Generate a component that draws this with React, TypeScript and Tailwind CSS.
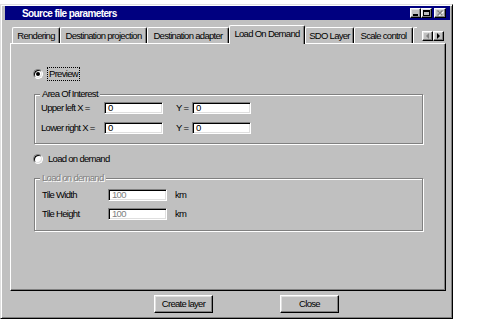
import React from 'react';

// shared classic-windows looks
const txt = "font-['Liberation_Sans',Arial,sans-serif] text-[9.5px] tracking-[-0.7px] leading-[12px]";
const raised = 'bg-[#c0c0c0] border border-t-white border-l-white border-r-black border-b-black shadow-[inset_-1px_-1px_0_#808080,inset_1px_1px_0_#dfdfdf]';
const sunken = 'bg-white border border-t-[#808080] border-l-[#808080] border-r-white border-b-white shadow-[inset_1px_1px_0_#000,inset_-1px_-1px_0_#dfdfdf]';

interface TabProps {
  label: string;
  width: string;
  active?: boolean;
}

const Tab: React.FC<TabProps> = ({ label, width, active }) => (
  <div
    className={`${width} ${
      active ? 'h-[19px] -mb-px relative z-10 pb-[2px]' : 'h-[16px]'
    } flex items-center justify-center bg-[#c0c0c0] border-t border-l border-r border-t-white border-l-white border-r-black rounded-t-[2px] shadow-[inset_-1px_0_0_#808080] ${txt}`}
  >
    {label}
  </div>
);

const Radio: React.FC<{ checked?: boolean }> = ({ checked }) => (
  <span className={`w-[10px] h-[10px] rounded-full flex items-center justify-center ${sunken}`}>
    {checked && <span className="w-[4px] h-[4px] rounded-full bg-black" />}
  </span>
);

const Field: React.FC<{ value: string; disabled?: boolean }> = ({ value, disabled }) => (
  <div className={`w-[59px] h-[12px] flex items-center pl-[3px] ${sunken}`}>
    <span className={`${txt} ${disabled ? 'text-[#808080]' : 'text-black'}`}>{value}</span>
  </div>
);

const App: React.FC = () => {
  return (
    <div className="w-[492px] h-[322px] bg-white pt-[4px] text-black">
      <div className="w-[453px] h-[315px] bg-[#c0c0c0] border border-t-[#dfdfdf] border-l-[#dfdfdf] border-r-black border-b-black shadow-[inset_1px_1px_0_#fff,inset_-1px_-1px_0_#808080] pt-[1px] pl-[4px] pr-[2px] flex flex-col">
        {/* Title bar */}
        <div className="h-[14px] bg-[#000080] flex items-center pl-[17px] pr-[4px]">
          <span className="font-['Liberation_Sans',Arial,sans-serif] text-[10px] font-bold tracking-[-0.6px] text-white flex-1">
            Source file parameters
          </span>
          <div className={`w-[11px] h-[10px] flex items-end pl-[2px] pb-[1px] ${raised}`}>
            <span className="w-[5px] h-[2px] bg-black" />
          </div>
          <div className={`w-[11px] h-[10px] flex items-center justify-center ${raised}`}>
            <span className="w-[7px] h-[6px] border border-black border-t-2" />
          </div>
          <div className={`w-[12px] h-[10px] ml-[2px] flex items-center justify-center ${raised}`}>
            <svg width="7" height="6" viewBox="0 0 7 6">
              <path d="M1.5 1.5 L6.5 6.5 M6.5 1.5 L1.5 6.5" stroke="#fff" strokeWidth="1.2" />
              <path d="M0.5 0.5 L5.5 5.5 M5.5 0.5 L0.5 5.5" stroke="#808080" strokeWidth="1.2" />
            </svg>
          </div>
        </div>

        {/* Tabs */}
        <div className="h-[18px] mt-[5px] ml-[7px] flex items-end">
          <Tab label="Rendering" width="w-[48px]" />
          <Tab label="Destination projection" width="w-[87px]" />
          <Tab label="Destination adapter" width="w-[82px]" />
          <Tab label="Load On Demand" width="w-[76px]" active />
          <Tab label="SDO Layer" width="w-[49px]" />
          <Tab label="Scale control" width="w-[59px]" />
          <div className="w-[4px] h-[16px] border-t border-l border-t-white border-l-white rounded-tl-[2px]" />
          <div className="flex ml-[5px] mb-[2px]">
            <div className={`w-[11px] h-[10px] flex items-center justify-center ${raised}`}>
              <span className="w-0 h-0 border-y-[3px] border-y-transparent border-r-[3px] border-r-[#808080]" />
            </div>
            <div className={`w-[11px] h-[10px] flex items-center justify-center ${raised}`}>
              <span className="w-0 h-0 border-y-[3px] border-y-transparent border-l-[3px] border-l-black" />
            </div>
          </div>
        </div>

        {/* Panel */}
        <div className="w-[436px] h-[248px] ml-[5px] border border-t-white border-l-white border-r-black border-b-black shadow-[inset_-1px_-1px_0_#808080] flex flex-col">
          <div className="h-[13px] mt-[23px] ml-[22px] flex items-center gap-[4px]">
            <Radio checked />
            <span className={`${txt} border border-dotted border-black px-[1px] leading-[11px]`}>Preview</span>
          </div>

          <fieldset className="w-[389px] mt-[8px] ml-[23px] px-[5px] pb-[9px] border border-[#808080] shadow-[inset_1px_1px_0_#fff,1px_1px_0_#fff]">
            <legend className={`${txt} px-[2px] bg-[#c0c0c0]`}>Area Of Interest</legend>
            <div className="mt-[2px] flex items-center ml-[1px]">
              <span className={`${txt} w-[63px]`}>Upper left X =</span>
              <Field value="0" />
              <span className={`${txt} w-[16px] ml-[13px]`}>Y =</span>
              <Field value="0" />
            </div>
            <div className="mt-[8px] flex items-center ml-[1px]">
              <span className={`${txt} w-[63px]`}>Lower right X =</span>
              <Field value="0" />
              <span className={`${txt} w-[16px] ml-[13px]`}>Y =</span>
              <Field value="0" />
            </div>
          </fieldset>

          <div className="h-[13px] mt-[8px] ml-[22px] flex items-center gap-[5px]">
            <Radio />
            <span className={txt}>Load on demand</span>
          </div>

          <fieldset className="w-[389px] mt-[7px] ml-[23px] px-[5px] pb-[10px] border border-[#808080] shadow-[inset_1px_1px_0_#fff,1px_1px_0_#fff]">
            <legend className={`${txt} px-[2px] bg-[#c0c0c0] text-[#808080] [text-shadow:1px_1px_0_#fff]`}>
              Load on demand
            </legend>
            <div className="mt-[5px] flex items-center ml-[2px]">
              <span className={`${txt} w-[66px]`}>Tile Width</span>
              <Field value="100" disabled />
              <span className={`${txt} ml-[8px]`}>km</span>
            </div>
            <div className="mt-[7px] flex items-center ml-[2px]">
              <span className={`${txt} w-[66px]`}>Tile Height</span>
              <Field value="100" disabled />
              <span className={`${txt} ml-[8px]`}>km</span>
            </div>
          </fieldset>
        </div>

        {/* Buttons */}
        <div className="mt-[4px] ml-[149px] flex gap-[67px]">
          <button className={`w-[59px] h-[18px] flex items-center justify-center ${raised} ${txt}`}>Create layer</button>
          <button className={`w-[59px] h-[18px] flex items-center justify-center ${raised} ${txt}`}>Close</button>
        </div>
      </div>
    </div>
  );
};

export default App;
